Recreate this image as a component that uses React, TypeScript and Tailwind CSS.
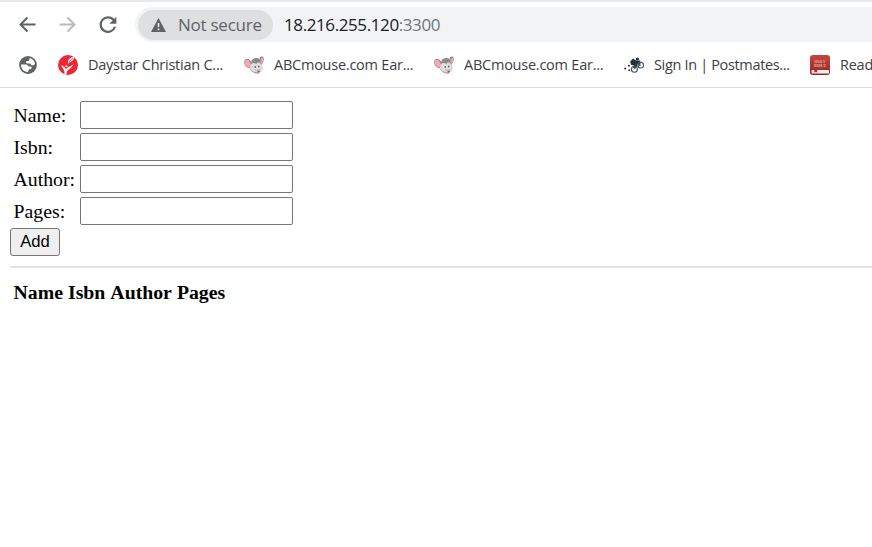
import type { ReactNode } from 'react';

const ui = "font-['Open_Sans','Noto_Sans',sans-serif]";

function Globe() {
  return (
    <svg width="18" height="18" viewBox="0 0 18 18" className="block">
      <circle cx="9" cy="9" r="8.9" fill="#5f6368" />
      <path d="M10.6 2.1C13.4 2.6 15.6 4.7 16 7.8c-.7 1.4-1.8 1.6-3 1.5-1.4-.2-1-1.6-2-1.8H8.1C6.8 7 6.7 5.7 7.6 5h1.9c1 0 .9-1.9 1.1-2.9Z" fill="#fff" />
      <path d="M2 8.4h4.9c2.1 0 2.1 2.2 3.3 2.2h1.5c1.5.2 1.3 2.3-.1 2.6h-1.5c-1 .3-.4 1.8-1.1 2.7C4.8 15.9 2 12.9 2 8.4Z" fill="#fff" />
    </svg>
  );
}

function Daystar() {
  return (
    <svg width="20" height="20" viewBox="0 0 20 20" className="block">
      <circle cx="10" cy="10" r="10" fill="#ec2832" />
      <path d="M10 7.2C9.9 4.7 12 2.6 16.1 1.8 16.4 4.8 13.8 6.9 11.2 7.4L9.9 8.7Z" fill="#fff" />
      <path d="m11 7 4-3.8M12.4 7.2l1.9-.3" stroke="#ec2832" strokeWidth=".7" />
      <path d="M2.8 9.8 6 11.7c.9.6 1.3 1.9 1.8 2.9.7-1.6 2.4-2.6 4-3.2l4-2.1-2.4 2.9c-1.3 1.5-3 2.1-4 3.6-.8 1.2-.8 2.4-1.1 3.5L6.4 19c.5-2.3-.3-4.2-1.6-5.7Z" fill="#fff" />
      <circle cx="8.4" cy="11.3" r="1" fill="#fff" />
    </svg>
  );
}

function Mouse() {
  return (
    <svg width="20" height="20" viewBox="0 0 20 20" className="block">
      <path d="M7.5 5.8C8.8 3.3 12 2.5 14.6 3.5l3 4.5.3 6-3 4.5-4.7-.5-4-4.2Z" fill="#8b8b8b" />
      <ellipse cx="4" cy="8.4" rx="3.5" ry="4.9" transform="rotate(-26 4 8.4)" fill="#8c8686" />
      <ellipse cx="3.8" cy="8.6" rx="2.7" ry="4.2" transform="rotate(-26 3.8 8.6)" fill="#f6a6ad" />
      <ellipse cx="17.4" cy="5.3" rx="2.2" ry="3.8" transform="rotate(12 17.4 5.3)" fill="#8c8686" />
      <ellipse cx="17.8" cy="5.6" rx="1.4" ry="2.8" transform="rotate(10 17.8 5.6)" fill="#f6a6ad" />
      <path d="M6.6 10.5c.8-2.7 4.2-3.2 5.6-1.2.8-2.2 3.6-2.4 4.4-.6 1 1.6 2.8 2.9 2.5 4.8-.4 2.5-2.7 4.2-4.9 4.1-3.7 0-7.2-1.6-8.4-4.2Z" fill="#dedede" />
      <path d="M5.7 13.5c2 3.4 5.3 4.8 8.6 4.5" stroke="#a4a4a4" strokeWidth=".7" fill="none" />
      <ellipse cx="11.2" cy="12" rx=".65" ry="1.1" fill="#484848" />
      <ellipse cx="14.8" cy="11.4" rx=".65" ry="1" fill="#484848" />
      <path d="M11 14.9c2 .9 4.2.4 5.4-1" stroke="#888" strokeWidth=".5" fill="none" />
      <ellipse cx="14.7" cy="16.4" rx="1.3" ry="1" fill="#d94145" />
    </svg>
  );
}

function Cyclist() {
  return (
    <svg width="20" height="20" viewBox="0 0 20 20" className="block">
      <g fill="#25303b">
        <circle cx="1.2" cy="13.6" r="1" /><circle cx="5" cy="10.8" r="1" /><circle cx="5.3" cy="15.3" r="1" />
        <circle cx="13.4" cy="4" r="1.6" />
        <path d="m6.2 6.5 2.8-3.1 3 2h4.2v1.5h-2.1l2.6 1.6-.7 1.5-2.7-.8-.6 2.3-1.8 2.1-1.9-.8 1-2.4-3.1-.6Z" />
      </g>
      <g fill="none" stroke="#4b555e" strokeWidth="1.1">
        <circle cx="10.4" cy="14.2" r="3" /><circle cx="16.8" cy="10.2" r="2.8" />
        <path d="m10.4 14.2 2.3-2.8 4.1-1.2M13.1 11.7l-2.7-.6" strokeWidth="1" />
      </g>
    </svg>
  );
}

function BibleBook() {
  return (
    <svg width="20" height="20" viewBox="0 0 20 20" className="block">
      <defs><linearGradient id="cover" x2="0" y2="1"><stop stopColor="#c54640" /><stop offset="1" stopColor="#942722" /></linearGradient></defs>
      <rect width="20" height="20" rx="3" fill="url(#cover)" />
      <path d="M2.2 15.1H19v3.3H2.2c-1-.8-1-2.5 0-3.3Z" fill="#f5eeee" />
      <path d="M4.2 15.1h3v2.5l-1.5-.6-1.5.6Z" fill="#dd1830" />
      <text x="10" y="7.9" textAnchor="middle" fontSize="5" textLength="11" lengthAdjust="spacingAndGlyphs" fill="#efaaa1" fontFamily="Liberation Serif" fontWeight="bold">HOLY</text>
      <text x="10" y="12" textAnchor="middle" fontSize="5" textLength="12" lengthAdjust="spacingAndGlyphs" fill="#efaaa1" fontFamily="Liberation Serif" fontWeight="bold">BIBLE</text>
    </svg>
  );
}

function Bookmark({ icon, label, width, tracking = 'tracking-[-0.24px]' }: { icon: ReactNode; label: string; width: string; tracking?: string }) {
  return (
    <div className={`flex shrink-0 items-center ${width}`}>
      {icon}
      <span className={`ml-[10px] whitespace-nowrap text-[14.5px] leading-5 text-[#3c4043] ${tracking}`}>{label}</span>
    </div>
  );
}

export default function App() {
  return (
    <div className="h-[547px] w-[872px] overflow-hidden bg-white">
      <header className={`h-[88px] border-b border-[#d9dadd] ${ui}`}>
        <div className="h-0.5 bg-[#e8e8ed]" />
        <div className="flex h-[45px] items-start pt-[5px]">
          <div className="flex h-[35px] w-[135px] items-center pl-[18px]">
            <svg width="100" height="24" viewBox="0 0 100 24" fill="none" strokeWidth="2">
              <path d="M17.5 11.5H3M9.5 4.5l-7 7 7 7" stroke="#5f6368" />
              <path d="M41.5 11.5H56M49.5 4.5l7 7-7 7" stroke="#bababc" />
              <path d="M95.7 7A7.3 7.3 0 1 0 97 13.7" stroke="#5f6368" strokeWidth="2.2" />
              <path d="M98.4 3.7v7h-7Z" fill="#5f6368" />
            </svg>
          </div>
          <div className="flex h-[35px] flex-1 items-center rounded-l-full bg-[#f1f3f4] pl-[3px]">
            <div className="flex h-[30px] w-[135px] shrink-0 items-center rounded-full bg-[#dddfe1] pl-[13px] text-[#5f6368]">
              <svg width="15" height="14" viewBox="0 0 15 14"><path d="M7.5 0 15 14H0Z" fill="#5f6368" /><path d="M7.5 5v4M7.5 10.5v1.7" stroke="#eee" strokeWidth="1.6" /></svg>
              <span className="ml-3 whitespace-nowrap text-[17px] leading-6 tracking-[-0.25px]">Not secure</span>
            </div>
            <span className="ml-[11px] whitespace-nowrap text-[17px] leading-6 tracking-[-0.4px] text-[#202124]">18.216.255.120<span className="text-[#70757a]">:3300</span></span>
          </div>
        </div>
        <div className="flex h-9 items-center pl-[19px]">
          <div className="w-[39px] shrink-0"><Globe /></div>
          <Bookmark icon={<Daystar />} label="Daystar Christian C..." width="w-[186px]" />
          <Bookmark icon={<Mouse />} label="ABCmouse.com Ear..." width="w-[190px]" />
          <Bookmark icon={<Mouse />} label="ABCmouse.com Ear..." width="w-[190px]" />
          <Bookmark icon={<Cyclist />} label="Sign In | Postmates..." width="w-[186px]" tracking="tracking-[-0.34px]" />
          <Bookmark icon={<BibleBook />} label="Read" width="w-[80px]" />
        </div>
      </header>
      <main className="pl-[10px] pt-[13px] font-['Liberation_Serif',serif] text-[20px] leading-7 text-black">
        <form onSubmit={(e) => e.preventDefault()}>
          <div className="flex flex-col gap-1 pl-[3px]">
            {['Name', 'Isbn', 'Author', 'Pages'].map((name) => (
              <label key={name} className="flex h-7 items-center">
                <span className="w-[67px] shrink-0 pl-[0.5px] text-[19.8px]">{name}:</span>
                <input aria-label={name} className="h-7 w-[213px] rounded-[2px] border border-[#767676] bg-white px-1 text-base" />
              </label>
            ))}
          </div>
          <button className="mt-[3px] flex h-7 w-[50px] items-center justify-center rounded-[3px] border border-[#767676] bg-[#efefef] font-['Liberation_Sans',sans-serif] text-[16.67px] leading-5">Add</button>
        </form>
        <hr className="mt-[10px] border-0 border-t-2 border-[#e1e5e9]" />
        <div className="mt-[10px] flex gap-[5px] pl-[3.5px] text-[19.8px] font-bold">
          <span>Name</span><span>Isbn</span><span>Author</span><span>Pages</span>
        </div>
      </main>
    </div>
  );
}
